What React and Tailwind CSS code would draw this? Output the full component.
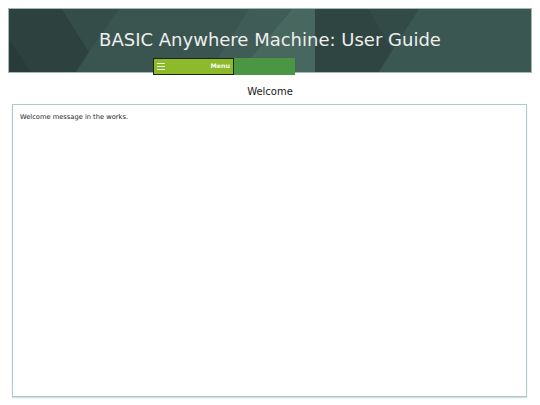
const BannerArt = () => (
  <svg
    className="absolute inset-0 h-full w-full"
    viewBox="0 0 522 63"
    preserveAspectRatio="none"
    aria-hidden="true"
  >
    <rect width="522" height="63" fill="#3a5550" />
    {/* left dark facet */}
    <polygon points="0,0 53,0 80,43 67,63 0,63" fill="#2d423f" />
    <polygon points="0,30 22,63 0,63" fill="#2a3c39" />
    {/* V between */}
    <polygon points="53,0 110,0 80,43" fill="#354d49" />
    {/* middle light facet */}
    <polygon points="283,0 306,0 306,63 230,63" fill="#47675f" />
    <polygon points="240,0 283,0 230,63 200,63" fill="#3f5c56" />
    {/* right dark panel */}
    <polygon points="306,0 410,0 383,42 370,63 306,63" fill="#2f4541" />
    <polygon points="360,0 410,0 383,42" fill="#334b46" />
    <polygon points="410,0 522,0 522,63 370,63 383,42" fill="#3b5751" />
  </svg>
);

const MenuBar = () => (
  <div className="flex h-[17px] w-[142px]">
    <div className="flex w-[81px] items-center justify-between border border-[#1d2415] bg-[#8cba2a] pl-[3px] pr-[3px]">
      <div className="flex flex-col gap-[2px]">
        <span className="block h-px w-[8px] bg-[#f2f7e4]" />
        <span className="block h-px w-[8px] bg-[#f2f7e4]" />
        <span className="block h-px w-[8px] bg-[#f2f7e4]" />
      </div>
      <span className="text-[6.3px] font-bold leading-none text-[#f6f9ee]">Menu</span>
    </div>
    <div className="flex-1 bg-[#4a9642]" />
  </div>
);

export default function App() {
  return (
    <div className="min-h-[405px] bg-white pt-2 font-['DejaVu_Sans',Verdana,sans-serif] text-[#222]">
      {/* header banner */}
      <header className="relative mx-2 flex h-[65px] flex-col border border-[#a3b8b4]">
        <BannerArt />
        <h1 className="relative pt-[20px] text-center text-[18px] leading-[21px] font-normal text-[#eeeeee]">
          BASIC Anywhere Machine: User Guide
        </h1>
        <div className="relative mt-auto -mb-[3px] ml-[144px]">
          <MenuBar />
        </div>
      </header>

      <h2 className="mt-[13px] text-center text-[10px] leading-[12px] font-normal text-[#1a1a1a]">
        Welcome
      </h2>

      <main className="mt-[6px] ml-[12px] mr-[13px] h-[293px] border border-[#a9cccc] px-[7px] pt-[8px] shadow-[0_1px_1px_rgba(120,160,160,0.35)]">
        <p className="text-[6.7px] leading-[8px] text-[#222]">Welcome message in the works.</p>
      </main>
    </div>
  );
}
